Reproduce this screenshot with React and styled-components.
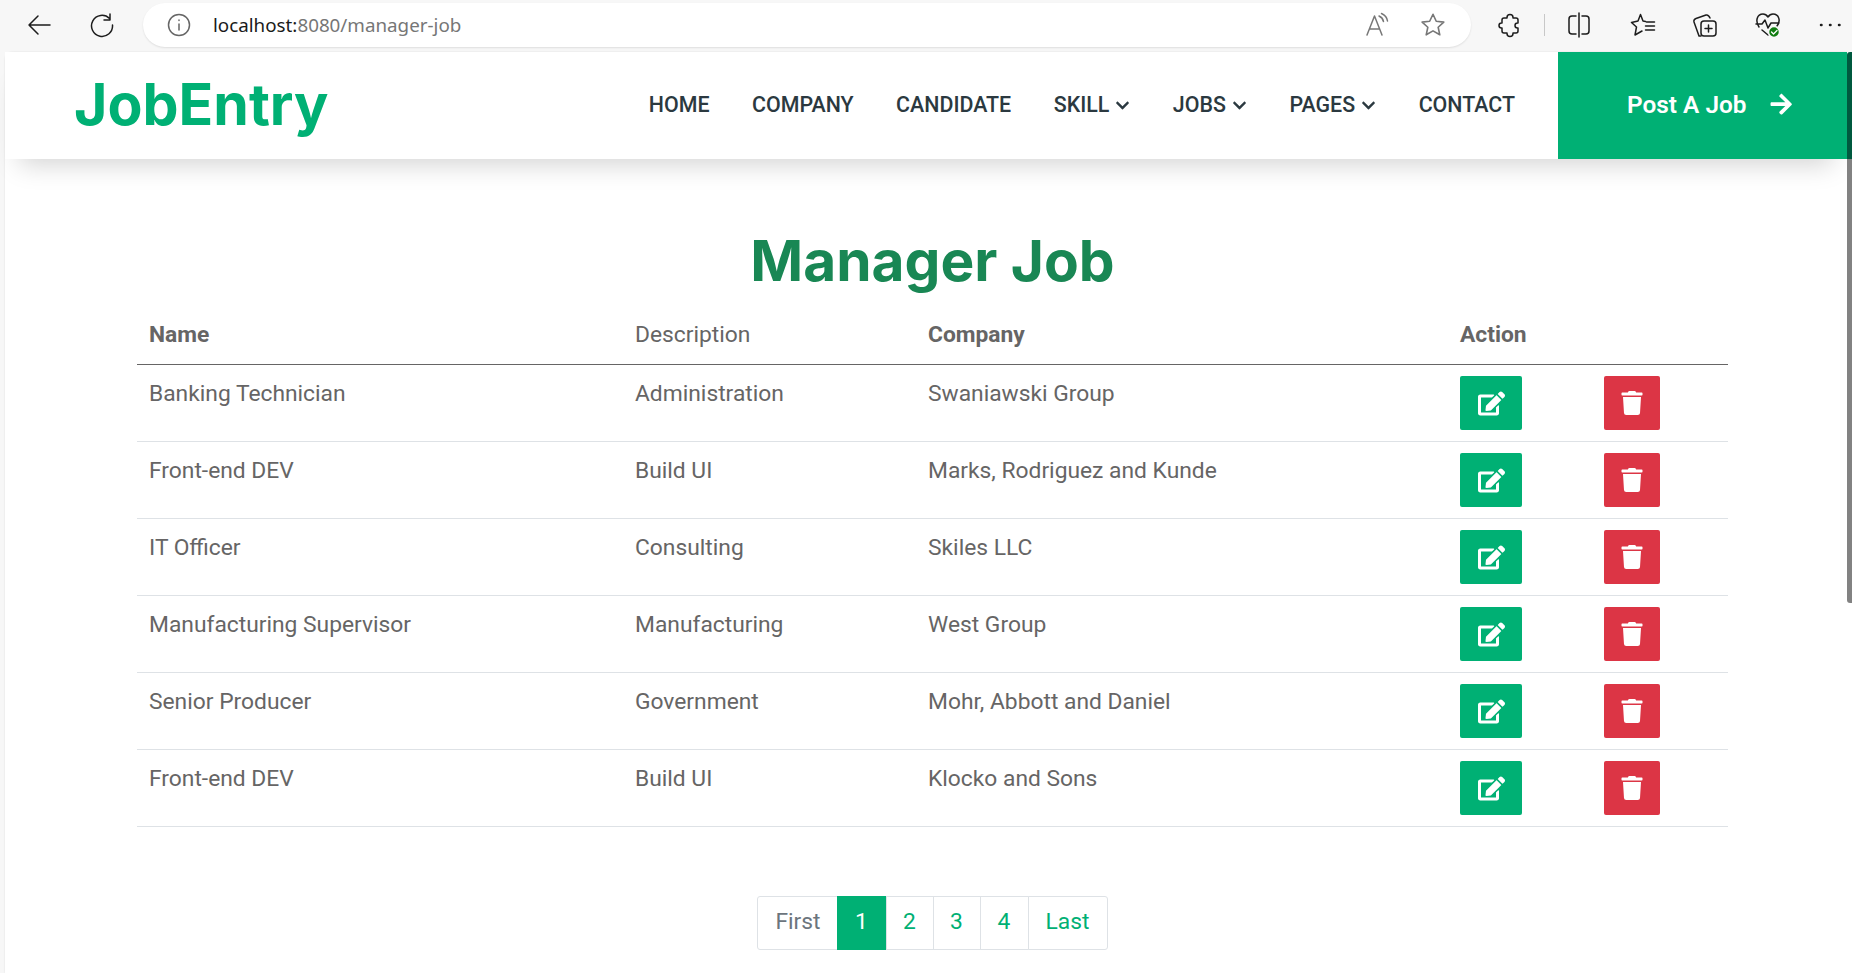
import React from "react";
import styled, { createGlobalStyle } from "styled-components";
import { FaArrowRight, FaChevronDown, FaEdit, FaTrash } from "react-icons/fa";

const GlobalStyle = createGlobalStyle`
  html, body {
    margin: 0;
    padding: 0;
    height: 100%;
    overflow: hidden;
    background: #f7f7f7;
  }
  * {
    box-sizing: border-box;
  }
`;

const Window = styled.div`
  width: 1852px;
  height: 973px;
  display: flex;
  flex-direction: column;
  overflow: hidden;
  font-family: Roboto, "Liberation Sans", sans-serif;
`;

/* browser toolbar */
const Chrome = styled.div`
  height: 52px;
  flex: none;
  display: flex;
  align-items: center;
  padding: 0 0 2px 26px;
  background: #f7f7f7;
`;

const ChromeIcon = styled.svg`
  width: ${(props) => props.size || 26}px;
  height: ${(props) => props.size || 26}px;
  flex: none;
  margin-left: ${(props) => props.left || 0}px;
  fill: none;
  stroke: #1d1d1d;
  stroke-width: 1.5;
  stroke-linecap: round;
  stroke-linejoin: round;
`;

const AddressBar = styled.div`
  width: 1328px;
  height: 44px;
  flex: none;
  margin-left: 28px;
  padding: 0 24px 0 24px;
  display: flex;
  align-items: center;
  border-radius: 22px;
  background: #fff;
  box-shadow: 0 1px 2px rgba(0, 0, 0, 0.1);
`;

const Url = styled.span`
  flex: 1;
  margin-left: 22px;
  font-family: "Noto Sans", sans-serif;
  font-size: 18.8px;
  color: #767676;

  b {
    font-weight: 400;
    color: #1a1a1a;
  }
`;

const Separator = styled.div`
  width: 1px;
  height: 22px;
  flex: none;
  margin-left: 21px;
  background: #c8c8c8;
`;

const Viewport = styled.div`
  flex: 1;
  display: flex;
  min-height: 0;
  padding-left: 5px;
`;

const Page = styled.div`
  flex: 1;
  min-width: 0;
  background: #fff;
  border-top-left-radius: 8px;
  box-shadow: 0 0 2px rgba(0, 0, 0, 0.12);
`;

const Scrollbar = styled.div`
  width: 5px;
  flex: none;
  background: #fff;

  &::before {
    content: "";
    display: block;
    height: 551px;
    border-radius: 3px 0 0 3px;
    background: linear-gradient(#00593f 0 107px, #828282 107px);
  }
`;

/* site navbar */
const Navbar = styled.nav`
  height: 107px;
  display: flex;
  align-items: center;
  background: #fff;
  box-shadow: 0 20px 24px -14px rgba(0, 0, 0, 0.17);
`;

const Logo = styled.h1`
  margin: 0 0 2px 69px;
  font-family: Inter, sans-serif;
  font-size: 57.2px;
  font-weight: 700;
  color: #00b074;
`;

const NavList = styled.div`
  margin-left: auto;
  margin-right: 43px;
  margin-bottom: 3px;
  display: flex;
  align-items: center;
  gap: 42.5px;
`;

const NavLink = styled.a`
  display: flex;
  align-items: center;
  gap: 6px;
  font-size: 21.4px;
  font-weight: 500;
  color: #2b3940;
  text-transform: uppercase;

  svg {
    width: 15px;
    height: 15px;
    margin-top: 3px;
  }
`;

const PostJob = styled.a`
  width: 289px;
  height: 107px;
  flex: none;
  display: flex;
  align-items: center;
  justify-content: center;
  gap: 22px;
  padding: 0 0 3px 15px;
  font-size: 24.4px;
  font-weight: 600;
  color: #fff;
  background: #00b074;
`;

/* main content */
const Content = styled.main`
  padding: 0 119px 0 132px;
`;

const Title = styled.h2`
  margin: 0;
  padding-top: 67px;
  height: 163px;
  text-align: center;
  font-family: Inter, sans-serif;
  font-size: 56.8px;
  font-weight: 700;
  line-height: 70px;
  color: #198754;
`;

const Table = styled.table`
  width: 100%;
  border-collapse: collapse;
  table-layout: fixed;
  font-size: 22.8px;
  color: #666565;
`;

const HeadCell = styled.th`
  padding: 0 12px 16px;
  text-align: left;
  vertical-align: top;
  line-height: 26px;
  font-size: 22.8px;
  font-weight: ${(props) => (props.plain ? 400 : 700)};
  border-bottom: 1px solid #666565;
`;

const Cell = styled.td`
  padding: 11px 12px;
  vertical-align: top;
  line-height: 35px;
  border-bottom: 1px solid #dee2e6;
`;

const ActionButton = styled.button`
  height: 54px;
  width: ${(props) => (props.danger ? 56 : 62)}px;
  display: flex;
  align-items: center;
  justify-content: center;
  padding: 0;
  border: 0;
  border-radius: 2px;
  color: #fff;
  font-size: ${(props) => (props.danger ? 24 : 27)}px;
  background: ${(props) => (props.danger ? "#dc3545" : "#00b074")};
`;

const Pagination = styled.ul`
  margin: 69px 0 0;
  padding: 0;
  display: flex;
  justify-content: center;
  list-style: none;
`;

const PageItem = styled.li`
  height: 54px;
  width: ${(props) => props.width}px;
  display: flex;
  align-items: center;
  justify-content: center;
  margin-left: -1px;
  padding-bottom: 3px;
  padding-left: ${(props) => (props.muted ? 2 : 0)}px;
  font-size: 22.8px;
  color: ${(props) => (props.active ? "#fff" : props.muted ? "#6c757d" : "#00b074")};
  background: ${(props) => (props.active ? "#00b074" : "#fff")};
  border: 1px solid ${(props) => (props.active ? "#00b074" : "#dee2e6")};

  &:first-child {
    border-radius: 3px 0 0 3px;
  }
  &:last-child {
    border-radius: 0 3px 3px 0;
  }
`;

const jobs = [
  ["Banking Technician", "Administration", "Swaniawski Group"],
  ["Front-end DEV", "Build UI", "Marks, Rodriguez and Kunde"],
  ["IT Officer", "Consulting", "Skiles LLC"],
  ["Manufacturing Supervisor", "Manufacturing", "West Group"],
  ["Senior Producer", "Government", "Mohr, Abbott and Daniel"],
  ["Front-end DEV", "Build UI", "Klocko and Sons"],
];

const pages = [
  { label: "First", width: 81, muted: true },
  { label: "1", width: 50, active: true },
  { label: "2", width: 48 },
  { label: "3", width: 48 },
  { label: "4", width: 49 },
  { label: "Last", width: 80 },
];

const App = () => {
  return (
    <Window>
      <GlobalStyle />
      <Chrome>
        <ChromeIcon viewBox="0 0 26 26">
          <path d="M24 13H3M12 4l-9 9 9 9" />
        </ChromeIcon>
        <ChromeIcon viewBox="0 0 26 26" left={37}>
          <path d="M20.5 6.5A10.5 10.5 0 1 0 23.5 13M21 2v6h-6" />
        </ChromeIcon>
        <AddressBar>
          <ChromeIcon viewBox="0 0 24 24" size={24}>
            <circle cx="12" cy="12" r="10.5" stroke="#666" />
            <path d="M12 11v6M12 7v.6" stroke="#666" />
          </ChromeIcon>
          <Url>
            <b>localhost:</b>8080/manager-job
          </Url>
          <ChromeIcon viewBox="0 0 26 26">
            <path d="M2 23 9.5 4l7.500 19M4.500 17h10M14 4c2.500 1 4 3 4.500 5.500M16.500 1.500c3.500 1.500 5.500 4 6 7.500" stroke="#777" />
          </ChromeIcon>
          <ChromeIcon viewBox="0 0 26 26" size={28} left={28}>
            <path d="m13 3 3 6.500 7 .8-5.200 4.800 1.500 7-6.300-3.600-6.300 3.600 1.500-7L2.900 10.300l7-.8z" stroke="#777" />
          </ChromeIcon>
        </AddressBar>
        <ChromeIcon viewBox="0 0 26 26" left={26}>
          <path d="M10 5.500a3 3 0 0 1 6 0V6h3a2 2 0 0 1 2 2v3h-.5a2.500 2.500 0 0 0 0 5h.5v3a2 2 0 0 1-2 2h-3v.5a3 3 0 0 1-6 0V21H7a2 2 0 0 1-2-2v-3h-.5a2.500 2.500 0 0 1 0-5H5V8a2 2 0 0 1 2-2h3z" />
        </ChromeIcon>
        <Separator />
        <ChromeIcon viewBox="0 0 26 26" left={21}>
          <path d="M10 4H6a3 3 0 0 0-3 3v12a3 3 0 0 0 3 3h4M16 4h4a3 3 0 0 1 3 3v12a3 3 0 0 1-3 3h-4M13 1v24" />
        </ChromeIcon>
        <ChromeIcon viewBox="0 0 26 26" left={38}>
          <path d="M15.500 9.500 13 9 10.500 2.500 8 9l-6.500 1.500 5 4.500L5 23l7-4M16.500 10h8M15.500 14h9M15.500 18h9" />
        </ChromeIcon>
        <ChromeIcon viewBox="0 0 26 26" left={36}>
          <rect x="9" y="9" width="15" height="15" rx="3" />
          <path d="M16.500 13v7M13 16.500h7M9 24H7l-5-14c-.5-2 .5-3 2-3.500L14 3c2-.5 3 .5 4 3" />
        </ChromeIcon>
        <ChromeIcon viewBox="0 0 26 26" left={37}>
          <path d="M4 15C0 9 2 2 8 2c3 0 5 3 5 3s2-3 5-3c6 0 8 7 4 12M1 12h6l3-4 3 8 3-5h8M7 18l6 5" />
          <circle cx="19" cy="20" r="5.500" fill="#107c10" stroke="#f7f7f7" />
          <path d="m16.500 20 2 2 3.500-3.500" stroke="#fff" strokeWidth="1.300" />
        </ChromeIcon>
        <ChromeIcon viewBox="0 0 26 26" left={36}>
          <path d="M4 13h.5M13 13h.5M22 13h.5" strokeWidth="2.500" />
        </ChromeIcon>
      </Chrome>
      <Viewport>
        <Page>
          <Navbar>
            <Logo>JobEntry</Logo>
            <NavList>
              <NavLink>Home</NavLink>
              <NavLink>Company</NavLink>
              <NavLink>Candidate</NavLink>
              <NavLink>
                Skill <FaChevronDown />
              </NavLink>
              <NavLink>
                Jobs <FaChevronDown />
              </NavLink>
              <NavLink>
                Pages <FaChevronDown />
              </NavLink>
              <NavLink>Contact</NavLink>
            </NavList>
            <PostJob>
              Post A Job <FaArrowRight />
            </PostJob>
          </Navbar>
          <Content>
            <Title>Manager Job</Title>
            <Table>
              <colgroup>
                <col width="486" />
                <col width="293" />
                <col width="532" />
                <col width="144" />
                <col />
              </colgroup>
              <thead>
                <tr>
                  <HeadCell>Name</HeadCell>
                  <HeadCell plain>Description</HeadCell>
                  <HeadCell>Company</HeadCell>
                  <HeadCell>Action</HeadCell>
                  <HeadCell />
                </tr>
              </thead>
              <tbody>
                {jobs.map((job, index) => (
                  <tr key={index}>
                    {job.map((text) => (
                      <Cell key={text}>{text}</Cell>
                    ))}
                    <Cell>
                      <ActionButton>
                        <FaEdit />
                      </ActionButton>
                    </Cell>
                    <Cell>
                      <ActionButton danger>
                        <FaTrash />
                      </ActionButton>
                    </Cell>
                  </tr>
                ))}
              </tbody>
            </Table>
            <Pagination>
              {pages.map((page) => (
                <PageItem key={page.label} width={page.width} active={page.active} muted={page.muted}>
                  {page.label}
                </PageItem>
              ))}
            </Pagination>
          </Content>
        </Page>
        <Scrollbar />
      </Viewport>
    </Window>
  );
};

export default App;
